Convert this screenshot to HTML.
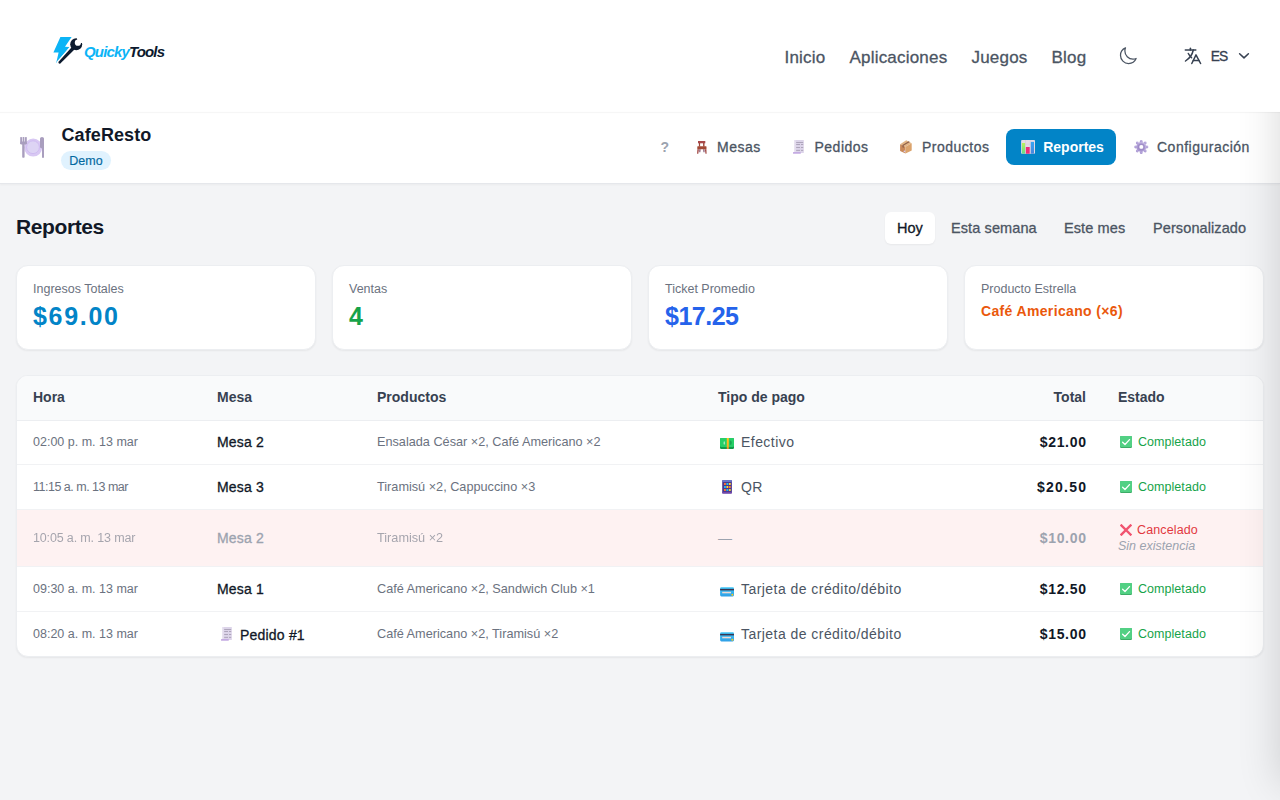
<!DOCTYPE html>
<html lang="es">
<head>
<meta charset="utf-8">
<title>CafeResto - Reportes</title>
<style>
*{box-sizing:border-box;margin:0;padding:0}
html,body{width:1280px;height:800px;overflow:hidden}
body{font-family:"Liberation Sans",sans-serif;background:#f3f4f6;position:relative;color:#111827}
.abs{position:absolute;white-space:nowrap}
.med{-webkit-text-stroke:0.3px currentColor}
#hdr{position:absolute;left:0;top:0;width:1280px;height:112px;background:#fff;z-index:2}
#hline{position:absolute;left:0;top:112.3px;width:1280px;height:1px;background:rgba(0,0,0,.035);box-shadow:0 0 1.5px rgba(0,0,0,.04);z-index:3}
#sub{position:absolute;left:0;top:112px;width:1280px;height:72px;background:#fff;border-bottom:1px solid #e5e7eb;box-shadow:0 1px 2px rgba(0,0,0,.04)}
.nav{font-size:17px;color:#4b5563;line-height:20px;letter-spacing:0.2px}
.sn{font-size:14px;color:#4b5563;line-height:18px;letter-spacing:0.5px}
.card{position:absolute;top:265px;width:300px;height:85px;background:#fff;border-radius:12px;box-shadow:0 1px 2px rgba(0,0,0,.06);border:1px solid #eceef1}
.card .lbl{position:absolute;left:16px;top:15px;font-size:12.5px;color:#6b7280;line-height:16px;white-space:nowrap}
.card .val{position:absolute;left:16px;top:35.4px;font-size:25px;font-weight:bold;line-height:30px;white-space:nowrap}
#tbl{position:absolute;left:16px;top:375px;width:1248px;height:282px;background:#fff;border-radius:12px;box-shadow:0 1px 2px rgba(0,0,0,.06);border:1px solid #eceef1;overflow:hidden}
.row{position:absolute;left:0;width:1246px;border-bottom:1px solid #f1f2f4}
.th{position:absolute;font-size:14px;font-weight:bold;color:#374151;line-height:18px;white-space:nowrap;margin-top:-1.2px}
.td{position:absolute;white-space:nowrap;line-height:16px}
.t-hora{font-size:12.5px;color:#6b7280}
.t-mesa{font-size:14px;color:#111827;letter-spacing:0.2px}
.t-prod{font-size:12.7px;color:#6b7280}
.t-pago{font-size:14px;color:#4b5563;letter-spacing:0.45px}
.t-tot{font-size:14px;font-weight:bold;color:#111827;text-align:right;letter-spacing:0.7px;margin-right:-0.7px}
.t-est{font-size:12.5px;color:#16a34a;letter-spacing:0.05px}
#shade{position:absolute;left:0;top:0;width:1280px;height:800px;overflow:hidden;pointer-events:none}
#shade div{position:absolute;left:1280px;top:40px;width:200px;height:745px;box-shadow:0 0 40px rgba(0,0,0,.16)}
</style>
</head>
<body>
<div id="hdr">
  <!-- logo -->
  <svg class="abs" style="left:50px;top:32px" width="40" height="36" viewBox="0 0 40 36">
    <defs>
      <mask id="jaw" maskUnits="userSpaceOnUse" x="0" y="0" width="40" height="36">
        <rect x="0" y="0" width="40" height="36" fill="#fff"/>
        <circle cx="27.9" cy="10.7" r="3.1" fill="#000"/>
        <path d="M27.9 10.7 L25.8 1 L40 1 L40 11.6 Z" fill="#000"/>
      </mask>
    </defs>
    <path d="M10.4 5 L21.6 5 L15 14.8 L19.4 15 L6.2 31 L8.6 20.4 L3.4 20.4 Z" fill="#0cb4f6"/>
    <g mask="url(#jaw)">
      <g fill="#fff" stroke="#fff" stroke-width="2.6" stroke-linejoin="round">
        <path d="M8.34 29.97 L22.1 14.75 L24.7 17.25 L10.06 31.63 Z"/>
        <circle cx="26.2" cy="12.2" r="6"/>
      </g>
      <g fill="#0c1a2e">
        <path d="M8.34 29.97 L22.1 14.75 L24.7 17.25 L10.06 31.63 Q8.4 31.9 8.34 29.97 Z"/>
        <circle cx="26.2" cy="12.2" r="6"/>
      </g>
    </g>
  </svg>
  <div id="logo" class="abs" style="left:84px;top:43px;font-size:15px;font-weight:bold;font-style:italic;line-height:18px;letter-spacing:-0.85px"><span style="color:#0cb4f6">Quicky</span><span style="color:#0c1a2e">Tools</span></div>
  <div id="n1" class="abs nav med" style="left:784.5px;top:47.5px">Inicio</div>
  <div id="n2" class="abs nav med" style="left:849.5px;top:47.5px">Aplicaciones</div>
  <div id="n3" class="abs nav med" style="left:971.5px;top:47.5px">Juegos</div>
  <div id="n4" class="abs nav med" style="left:1051.5px;top:47.5px">Blog</div>
  <svg class="abs" style="left:1118px;top:46px" width="20" height="20" viewBox="0 0 24 24" fill="none" stroke="#4b5563" stroke-width="1.5" stroke-linecap="round" stroke-linejoin="round"><path d="M21.752 15.002A9.72 9.72 0 0 1 18 15.75c-5.385 0-9.75-4.365-9.75-9.75 0-1.33.266-2.597.748-3.752A9.753 9.753 0 0 0 3 11.25C3 16.635 7.365 21 12.75 21a9.753 9.753 0 0 0 9.002-5.998Z"/></svg>
  <svg class="abs" style="left:1184px;top:47px" width="18" height="18" viewBox="0 0 18 18" fill="none" stroke="#374151" stroke-width="1.5" stroke-linecap="round" stroke-linejoin="round"><path d="M1.3 2.9 H11.8"/><path d="M6.4 1.2 V2.9"/><path d="M9.3 3 C8.5 7 6 11 1.5 14"/><path d="M4.3 6.5 C5.2 8.3 6.3 9.6 7.6 10.7"/><path d="M7.8 16.5 L12 7.9 L16.6 16.5"/><path d="M9.3 13.6 H14.9"/></svg>
  <div id="es" class="abs med" style="left:1210.8px;top:48.3px;font-size:13.8px;color:#374151;line-height:18px;letter-spacing:-0.9px">ES</div>
  <svg class="abs" style="left:1238px;top:52px" width="12" height="8" viewBox="0 0 12 8" fill="none" stroke="#374151" stroke-width="1.5" stroke-linecap="round" stroke-linejoin="round"><path d="M1.6 1.7 L6 5.9 L10.4 1.7"/></svg>
</div>

<div id="hline"></div>
<div id="sub">
  <!-- plate emoji -->
  <svg class="abs" style="left:20px;top:25.0px" width="26" height="22" viewBox="0 0 26 22">
    <circle cx="13.2" cy="10.6" r="9" fill="#d8c8f3"/>
    <circle cx="13" cy="10.2" r="6.4" fill="#ddd4f4" stroke="#cdb9ef" stroke-width=".9"/>
    <g fill="#a99ebe">
      <rect x=".2" y="0" width="1.8" height="7" rx=".6"/>
      <rect x="2.6" y="0" width="1.8" height="7" rx=".6"/>
      <rect x="5" y="0" width="1.8" height="7" rx=".6"/>
      <rect x=".2" y="4.6" width="6.6" height="3" rx="1.3"/>
      <rect x="2.2" y="6" width="2.4" height="14.8" rx=".8"/>
      <path d="M20 1.5 Q20 0 22 0 Q24 0 24 1.5 L24 20.8 L22 20.8 L22 11.5 L20 10.5 Z"/>
    </g>
  </svg>
  <div id="cafe" class="abs" style="left:61.5px;top:12.0px;font-size:18px;font-weight:bold;color:#111827;line-height:22px;letter-spacing:0.1px">CafeResto</div>
  <div id="demo" class="abs med" style="left:61px;top:39.0px;width:50px;height:19px;border-radius:10px;background:#e0f2fe;color:#0369a1;font-size:12.5px;line-height:19px;text-align:center;padding-top:0.8px;-webkit-text-stroke:0.15px currentColor">Demo</div>

  <div id="q" class="abs" style="left:660.5px;top:26.0px;font-size:14px;font-weight:bold;color:#9ca3af;line-height:18px">?</div>
  <!-- chair -->
  <svg class="abs" style="left:696px;top:28.0px" width="12" height="14" viewBox="0 0 12 14">
    <path d="M3.3 9.2 L4.6 9.2 L4.3 12.2 L3.3 12.2 Z M7.2 9.2 L8.5 9.2 L8.5 12.2 L7.5 12.2 Z" fill="#7a4866"/>
    <rect x="2" y="1" width="7.3" height="2.3" fill="#a8494a"/>
    <rect x="2.9" y="3" width="1.2" height="3.6" fill="#9c4438"/>
    <rect x="7.1" y="3" width="1.4" height="3.6" fill="#9c4438"/>
    <rect x="1.3" y="6.2" width="9.2" height="3.1" rx=".6" fill="#a24a36"/>
    <path d="M1.4 9.2 L2.9 9.2 L2.3 13.8 L1.1 13.8 Z M8.9 9.2 L10.4 9.2 L10.6 13.8 L9.5 13.8 Z" fill="#a0443f"/>
  </svg>
  <div id="s1" class="abs sn med" style="left:717px;top:25.8px">Mesas</div>
  <!-- receipt -->
  <svg class="abs" style="left:793px;top:28.0px" width="12" height="14" viewBox="0 0 12 14">
    <rect x="1" y="0" width="9.8" height="13" fill="#dcd4e9"/>
    <rect x="1" y="0" width="1.5" height="13" fill="#e9e3f1"/>
    <g stroke="#a89fb6" stroke-width=".9">
      <path d="M3.2 2.5h7"/><path d="M3.2 4.5h3.8M8 4.5h2.2"/><path d="M3.2 7.5h3.8M8 7.5h2.2"/><path d="M3.2 10.4h3.8M8 10.4h2.2"/>
    </g>
    <rect x="0" y="12" width="7.8" height="1.8" rx=".6" fill="#c4abe2"/>
  </svg>
  <div id="s2" class="abs sn med" style="left:814.5px;top:25.8px">Pedidos</div>
  <!-- box -->
  <svg class="abs" style="left:899px;top:28.0px" width="14" height="14" viewBox="0 0 14 14">
    <path d="M1.1 4.2 L7.2 0.3 L12.7 3.2 L6.5 6.8 Z" fill="#e2b687"/>
    <path d="M1.1 4.2 L6.5 6.8 L6.5 13.6 L1.1 11 Z" fill="#c98858"/>
    <path d="M6.5 6.8 L12.7 3.2 L12.7 10.5 L6.5 13.6 Z" fill="#dba36c"/>
    <path d="M9.6 1.3 L10.9 2 L4.7 5.6 L4.7 7.9 L3.4 7.3 L3.4 5 Z" fill="#8e5e48"/>
    <circle cx="5.4" cy="11.4" r=".8" fill="#d9cdef"/>
  </svg>
  <div id="s3" class="abs sn med" style="left:922px;top:25.8px">Productos</div>
  <div id="btn" class="abs" style="left:1006px;top:17.0px;width:110px;height:36px;border-radius:8px;background:#0284c7"></div>
  <svg class="abs" style="left:1021px;top:28.0px" width="14" height="14" viewBox="0 0 14 14">
    <defs>
      <linearGradient id="gg" x1="0" y1="0" x2="0" y2="1"><stop offset="0" stop-color="#bdf25a"/><stop offset="1" stop-color="#62dc8c"/></linearGradient>
      <linearGradient id="gb" x1="0" y1="0" x2="0" y2="1"><stop offset="0" stop-color="#36a6f5"/><stop offset="1" stop-color="#4a86db"/></linearGradient>
    </defs>
    <rect x="0.1" y="0.1" width="13.9" height="13.6" rx=".8" fill="#e4dbe6"/>
    <path d="M4.5 0v14M9.2 0v14M0 4.2h14M0 9.2h14" stroke="#cfc4d3" stroke-width=".4"/>
    <rect x=".9" y="3" width="3.2" height="10.7" fill="url(#gg)"/>
    <rect x="4.9" y="7" width="3.8" height="6.7" fill="#ee2c78"/>
    <rect x="9.8" y="1.9" width="3.2" height="11.8" fill="url(#gb)"/>
  </svg>
  <div id="s4" class="abs sn" style="left:1043.2px;top:26.0px;color:#fff;font-weight:bold;letter-spacing:0">Reportes</div>
  <!-- gear -->
  <svg class="abs" style="left:1134px;top:28.0px" width="15" height="14" viewBox="0 0 15 14">
    <defs><linearGradient id="gear" x1="1" y1="0" x2="0" y2="1"><stop offset="0" stop-color="#c9bde6"/><stop offset="1" stop-color="#a08ccc"/></linearGradient></defs>
    <g fill="url(#gear)"><circle cx="12.90" cy="7.00" r="1.45"/><circle cx="11.26" cy="10.96" r="1.45"/><circle cx="7.30" cy="12.60" r="1.45"/><circle cx="3.34" cy="10.96" r="1.45"/><circle cx="1.70" cy="7.00" r="1.45"/><circle cx="3.34" cy="3.04" r="1.45"/><circle cx="7.30" cy="1.40" r="1.45"/><circle cx="11.26" cy="3.04" r="1.45"/><circle cx="7.3" cy="7" r="5"/></g>
    <circle cx="7.3" cy="7" r="2.9" fill="none" stroke="#9a86c2" stroke-width="1.3" opacity=".8"/>
    <circle cx="7.3" cy="6.9" r="1.9" fill="#fff"/>
  </svg>
  <div id="s5" class="abs sn med" style="left:1157px;top:25.8px">Configuración</div>
</div>

<!-- main -->
<div id="title" class="abs" style="left:16px;top:215px;font-size:21px;font-weight:bold;color:#111827;line-height:24px;letter-spacing:-0.4px">Reportes</div>
<div id="tab1" class="abs" style="left:885px;top:212px;width:50px;height:32px;background:#fff;border-radius:6px;box-shadow:0 1px 2px rgba(0,0,0,.05)"></div>
<div id="tb1" class="abs med" style="left:897px;top:218.8px;font-size:14.5px;color:#111827;line-height:18px">Hoy</div>
<div id="tb2" class="abs med" style="letter-spacing:0.1px;left:951px;top:218.8px;font-size:14.5px;color:#4b5563;line-height:18px">Esta semana</div>
<div id="tb3" class="abs med" style="letter-spacing:0.1px;left:1064px;top:218.8px;font-size:14.5px;color:#4b5563;line-height:18px">Este mes</div>
<div id="tb4" class="abs med" style="letter-spacing:0.1px;left:1153px;top:218.8px;font-size:14.5px;color:#4b5563;line-height:18px">Personalizado</div>

<div class="card" style="left:16px"><div id="c1l" class="lbl">Ingresos Totales</div><div id="c1v" class="val" style="color:#0284c7;letter-spacing:1.7px">$69.00</div></div>
<div class="card" style="left:332px"><div id="c2l" class="lbl">Ventas</div><div id="c2v" class="val" style="color:#16a34a">4</div></div>
<div class="card" style="left:648px"><div id="c3l" class="lbl">Ticket Promedio</div><div id="c3v" class="val" style="color:#2563eb;letter-spacing:-0.5px">$17.25</div></div>
<div class="card" style="left:964px"><div id="c4l" class="lbl">Producto Estrella</div><div id="c4v" class="val" style="color:#ea580c;font-size:14px;line-height:18px;top:35.5px;letter-spacing:0.35px">Café Americano (×6)</div></div>

<div id="tbl">
  <div class="row" style="top:0;height:45px;background:#f9fafb;border-bottom-color:#eceef1">
    <div id="h1" class="th" style="left:16px;top:13px">Hora</div>
    <div id="h2" class="th" style="left:200px;top:13px">Mesa</div>
    <div id="h3" class="th" style="left:360px;top:13px">Productos</div>
    <div id="h4" class="th" style="left:701px;top:13px">Tipo de pago</div>
    <div id="h5" class="th" style="right:177px;top:13px">Total</div>
    <div id="h6" class="th" style="left:1101px;top:13px">Estado</div>
  </div>
  <div class="row" style="top:44px;height:45px">
    <div class="td t-hora" style="left:16px;top:14.0px">02:00 p. m. 13 mar</div>
    <div class="td t-mesa med" style="left:200px;top:14.0px">Mesa 2</div>
    <div class="td t-prod" style="left:360px;top:14.0px">Ensalada César ×2, Café Americano ×2</div>
    <svg class="abs" style="left:703px;top:17.5px" width="14" height="11" viewBox="0 0 14 11"><defs><linearGradient id="band" x1="0" y1="0" x2="0" y2="1"><stop offset="0" stop-color="#ffc61a"/><stop offset=".75" stop-color="#fbb21f"/><stop offset="1" stop-color="#e9802a"/></linearGradient></defs><rect x="0" y="0" width="14" height="11" rx="1.3" fill="#119a4a"/><rect x="0" y="0" width="14" height="9" rx="1.3" fill="#26cf67"/><rect x="6.8" y="0" width="2" height="11" fill="url(#band)"/><ellipse cx="4.3" cy="5" rx=".8" ry="1.7" fill="#a5e8b8"/><path d="M9.8 2.6 A2 2.2 0 0 1 9.8 7 Z" fill="#19a552"/></svg>
    <div class="td t-pago" style="left:724px;top:14.0px">Efectivo</div>
    <div class="td t-tot" style="right:177px;top:14.0px">$21.00</div>
    <svg class="abs" style="left:1103px;top:16.0px" width="12" height="12" viewBox="0 0 12 12"><rect x="0" y="0" width="12" height="12" rx="1.3" fill="#3dac67"/><rect x="0" y="0" width="12" height="11" rx="1.3" fill="#52d084"/><path d="M2.6 6.2 L5 8.5 L9.5 3.6" fill="none" stroke="#fff" stroke-width="1.3" stroke-linecap="round" stroke-linejoin="round"/></svg>
    <div class="td t-est" style="left:1121px;top:14.0px">Completado</div>
  </div>
  <div class="row" style="top:89px;height:45px">
    <div class="td t-hora" style="left:16px;top:14.0px;letter-spacing:-0.5px">11:15 a. m. 13 mar</div>
    <div class="td t-mesa med" style="left:200px;top:14.0px">Mesa 3</div>
    <div class="td t-prod" style="left:360px;top:14.0px">Tiramisú ×2, Cappuccino ×3</div>
    <svg class="abs" style="left:705px;top:15.0px" width="10" height="14" viewBox="0 0 10 14"><rect x=".2" y=".1" width="9.7" height="13.5" rx="1" fill="#4a3890"/><rect x=".2" y=".1" width="9.7" height="1.9" rx=".8" fill="#6a74c6"/><rect x=".2" y="12" width="9.7" height="1.6" rx=".6" fill="#7446ad"/><rect x="2" y="3" width="1.9" height="1.9" rx=".3" fill="#ff7a30"/><rect x="4.4" y="3" width="1.9" height="1.9" rx=".3" fill="#22c0f2"/><rect x="6.9" y="3" width="1.9" height="1.9" rx=".3" fill="#ffd430"/><rect x="2" y="6" width="1.9" height="1.9" rx=".3" fill="#22c0f2"/><rect x="4.4" y="6" width="1.9" height="1.9" rx=".3" fill="#ffd430"/><rect x="6.9" y="6" width="1.9" height="1.9" rx=".3" fill="#ff7a30"/><rect x="2" y="9" width="1.9" height="1.9" rx=".3" fill="#ff7a30"/><rect x="4.4" y="9" width="1.9" height="1.9" rx=".3" fill="#22b8ee"/><rect x="6.9" y="9" width="1.9" height="1.9" rx=".3" fill="#e8cc40"/></svg>
    <div class="td t-pago" style="left:724px;top:14.0px">QR</div>
    <div class="td t-tot" style="right:177px;top:14.0px;letter-spacing:1.25px;margin-right:-1.25px">$20.50</div>
    <svg class="abs" style="left:1103px;top:16.0px" width="12" height="12" viewBox="0 0 12 12"><rect x="0" y="0" width="12" height="12" rx="1.3" fill="#3dac67"/><rect x="0" y="0" width="12" height="11" rx="1.3" fill="#52d084"/><path d="M2.6 6.2 L5 8.5 L9.5 3.6" fill="none" stroke="#fff" stroke-width="1.3" stroke-linecap="round" stroke-linejoin="round"/></svg>
    <div class="td t-est" style="left:1121px;top:14.0px">Completado</div>
  </div>
  <div class="row" style="top:134px;height:57px;background:#fef2f2">
    <div class="td t-hora" style="left:16px;top:20.0px;opacity:.6;letter-spacing:-0.15px">10:05 a. m. 13 mar</div>
    <div class="td t-mesa med" style="left:200px;top:20.0px;color:#9ca3af">Mesa 2</div>
    <div class="td t-prod" style="left:360px;top:20.0px;opacity:.6">Tiramisú ×2</div>
    <div class="td t-pago" style="left:701px;top:20.0px;color:#9ca3af">—</div>
    <div class="td t-tot" style="right:177px;top:20.0px;color:#9ca3af">$10.00</div>
    <svg class="abs" style="left:1103px;top:14px" width="12" height="12" viewBox="0 0 12 12"><path d="M1.5 1.5 L10.5 10.5 M10.5 1.5 L1.5 10.5" stroke="#f1536f" stroke-width="2.4" stroke-linecap="square"/></svg>
    <div class="td t-est" style="left:1120px;top:12px;color:#e2383f;letter-spacing:0.12px">Cancelado</div>
    <div class="td t-est" style="left:1101px;top:28px;color:#9ca3af;font-style:italic;letter-spacing:0">Sin existencia</div>
  </div>
  <div class="row" style="top:191px;height:45px">
    <div class="td t-hora" style="left:16px;top:14.0px;letter-spacing:0px">09:30 a. m. 13 mar</div>
    <div class="td t-mesa med" style="left:200px;top:14.0px">Mesa 1</div>
    <div class="td t-prod" style="left:360px;top:14.0px">Café Americano ×2, Sandwich Club ×1</div>
    <svg class="abs" style="left:703px;top:19.5px" width="14" height="10" viewBox="0 0 14 10"><defs><linearGradient id="cardg" x1="0" y1="0" x2="0" y2="1"><stop offset="0" stop-color="#3fc6f7"/><stop offset="1" stop-color="#2f9fe6"/></linearGradient></defs><rect x=".1" y=".2" width="13.9" height="9.2" rx="1.3" fill="url(#cardg)"/><rect x=".1" y="1.9" width="13.9" height="1.5" fill="#3a3550"/><rect x="2.2" y="4.8" width="8.8" height="1.5" fill="#efd9d3"/><circle cx="12.3" cy="7.8" r="1" fill="#f5cc1e"/></svg>
    <div class="td t-pago" style="left:724px;top:14.0px">Tarjeta de crédito/débito</div>
    <div class="td t-tot" style="right:177px;top:14.0px">$12.50</div>
    <svg class="abs" style="left:1103px;top:16.0px" width="12" height="12" viewBox="0 0 12 12"><rect x="0" y="0" width="12" height="12" rx="1.3" fill="#3dac67"/><rect x="0" y="0" width="12" height="11" rx="1.3" fill="#52d084"/><path d="M2.6 6.2 L5 8.5 L9.5 3.6" fill="none" stroke="#fff" stroke-width="1.3" stroke-linecap="round" stroke-linejoin="round"/></svg>
    <div class="td t-est" style="left:1121px;top:14.0px">Completado</div>
  </div>
  <div class="row" style="top:236px;height:44px;border-bottom:none">
    <div class="td t-hora" style="left:16px;top:14.0px;letter-spacing:0px">08:20 a. m. 13 mar</div>
    <svg class="abs" style="left:203.5px;top:15.0px" width="12" height="14" viewBox="0 0 12 14"><rect x="1" y="0" width="9.8" height="13" fill="#dcd4e9"/><rect x="1" y="0" width="1.5" height="13" fill="#e9e3f1"/><g stroke="#a89fb6" stroke-width=".9"><path d="M3.2 2.5h7"/><path d="M3.2 4.5h3.8M8 4.5h2.2"/><path d="M3.2 7.5h3.8M8 7.5h2.2"/><path d="M3.2 10.4h3.8M8 10.4h2.2"/></g><rect x="0" y="12" width="7.8" height="1.8" rx=".6" fill="#c4abe2"/></svg>
    <div class="td t-mesa med" style="left:223px;top:14.8px">Pedido #1</div>
    <div class="td t-prod" style="left:360px;top:14.0px">Café Americano ×2, Tiramisú ×2</div>
    <svg class="abs" style="left:703px;top:19.5px" width="14" height="10" viewBox="0 0 14 10"><defs><linearGradient id="cardg" x1="0" y1="0" x2="0" y2="1"><stop offset="0" stop-color="#3fc6f7"/><stop offset="1" stop-color="#2f9fe6"/></linearGradient></defs><rect x=".1" y=".2" width="13.9" height="9.2" rx="1.3" fill="url(#cardg)"/><rect x=".1" y="1.9" width="13.9" height="1.5" fill="#3a3550"/><rect x="2.2" y="4.8" width="8.8" height="1.5" fill="#efd9d3"/><circle cx="12.3" cy="7.8" r="1" fill="#f5cc1e"/></svg>
    <div class="td t-pago" style="left:724px;top:14.0px">Tarjeta de crédito/débito</div>
    <div class="td t-tot" style="right:177px;top:14.0px">$15.00</div>
    <svg class="abs" style="left:1103px;top:16.0px" width="12" height="12" viewBox="0 0 12 12"><rect x="0" y="0" width="12" height="12" rx="1.3" fill="#3dac67"/><rect x="0" y="0" width="12" height="11" rx="1.3" fill="#52d084"/><path d="M2.6 6.2 L5 8.5 L9.5 3.6" fill="none" stroke="#fff" stroke-width="1.3" stroke-linecap="round" stroke-linejoin="round"/></svg>
    <div class="td t-est" style="left:1121px;top:14.0px">Completado</div>
  </div>
</div>

<div id="shade"><div></div></div>
</body>
</html>
